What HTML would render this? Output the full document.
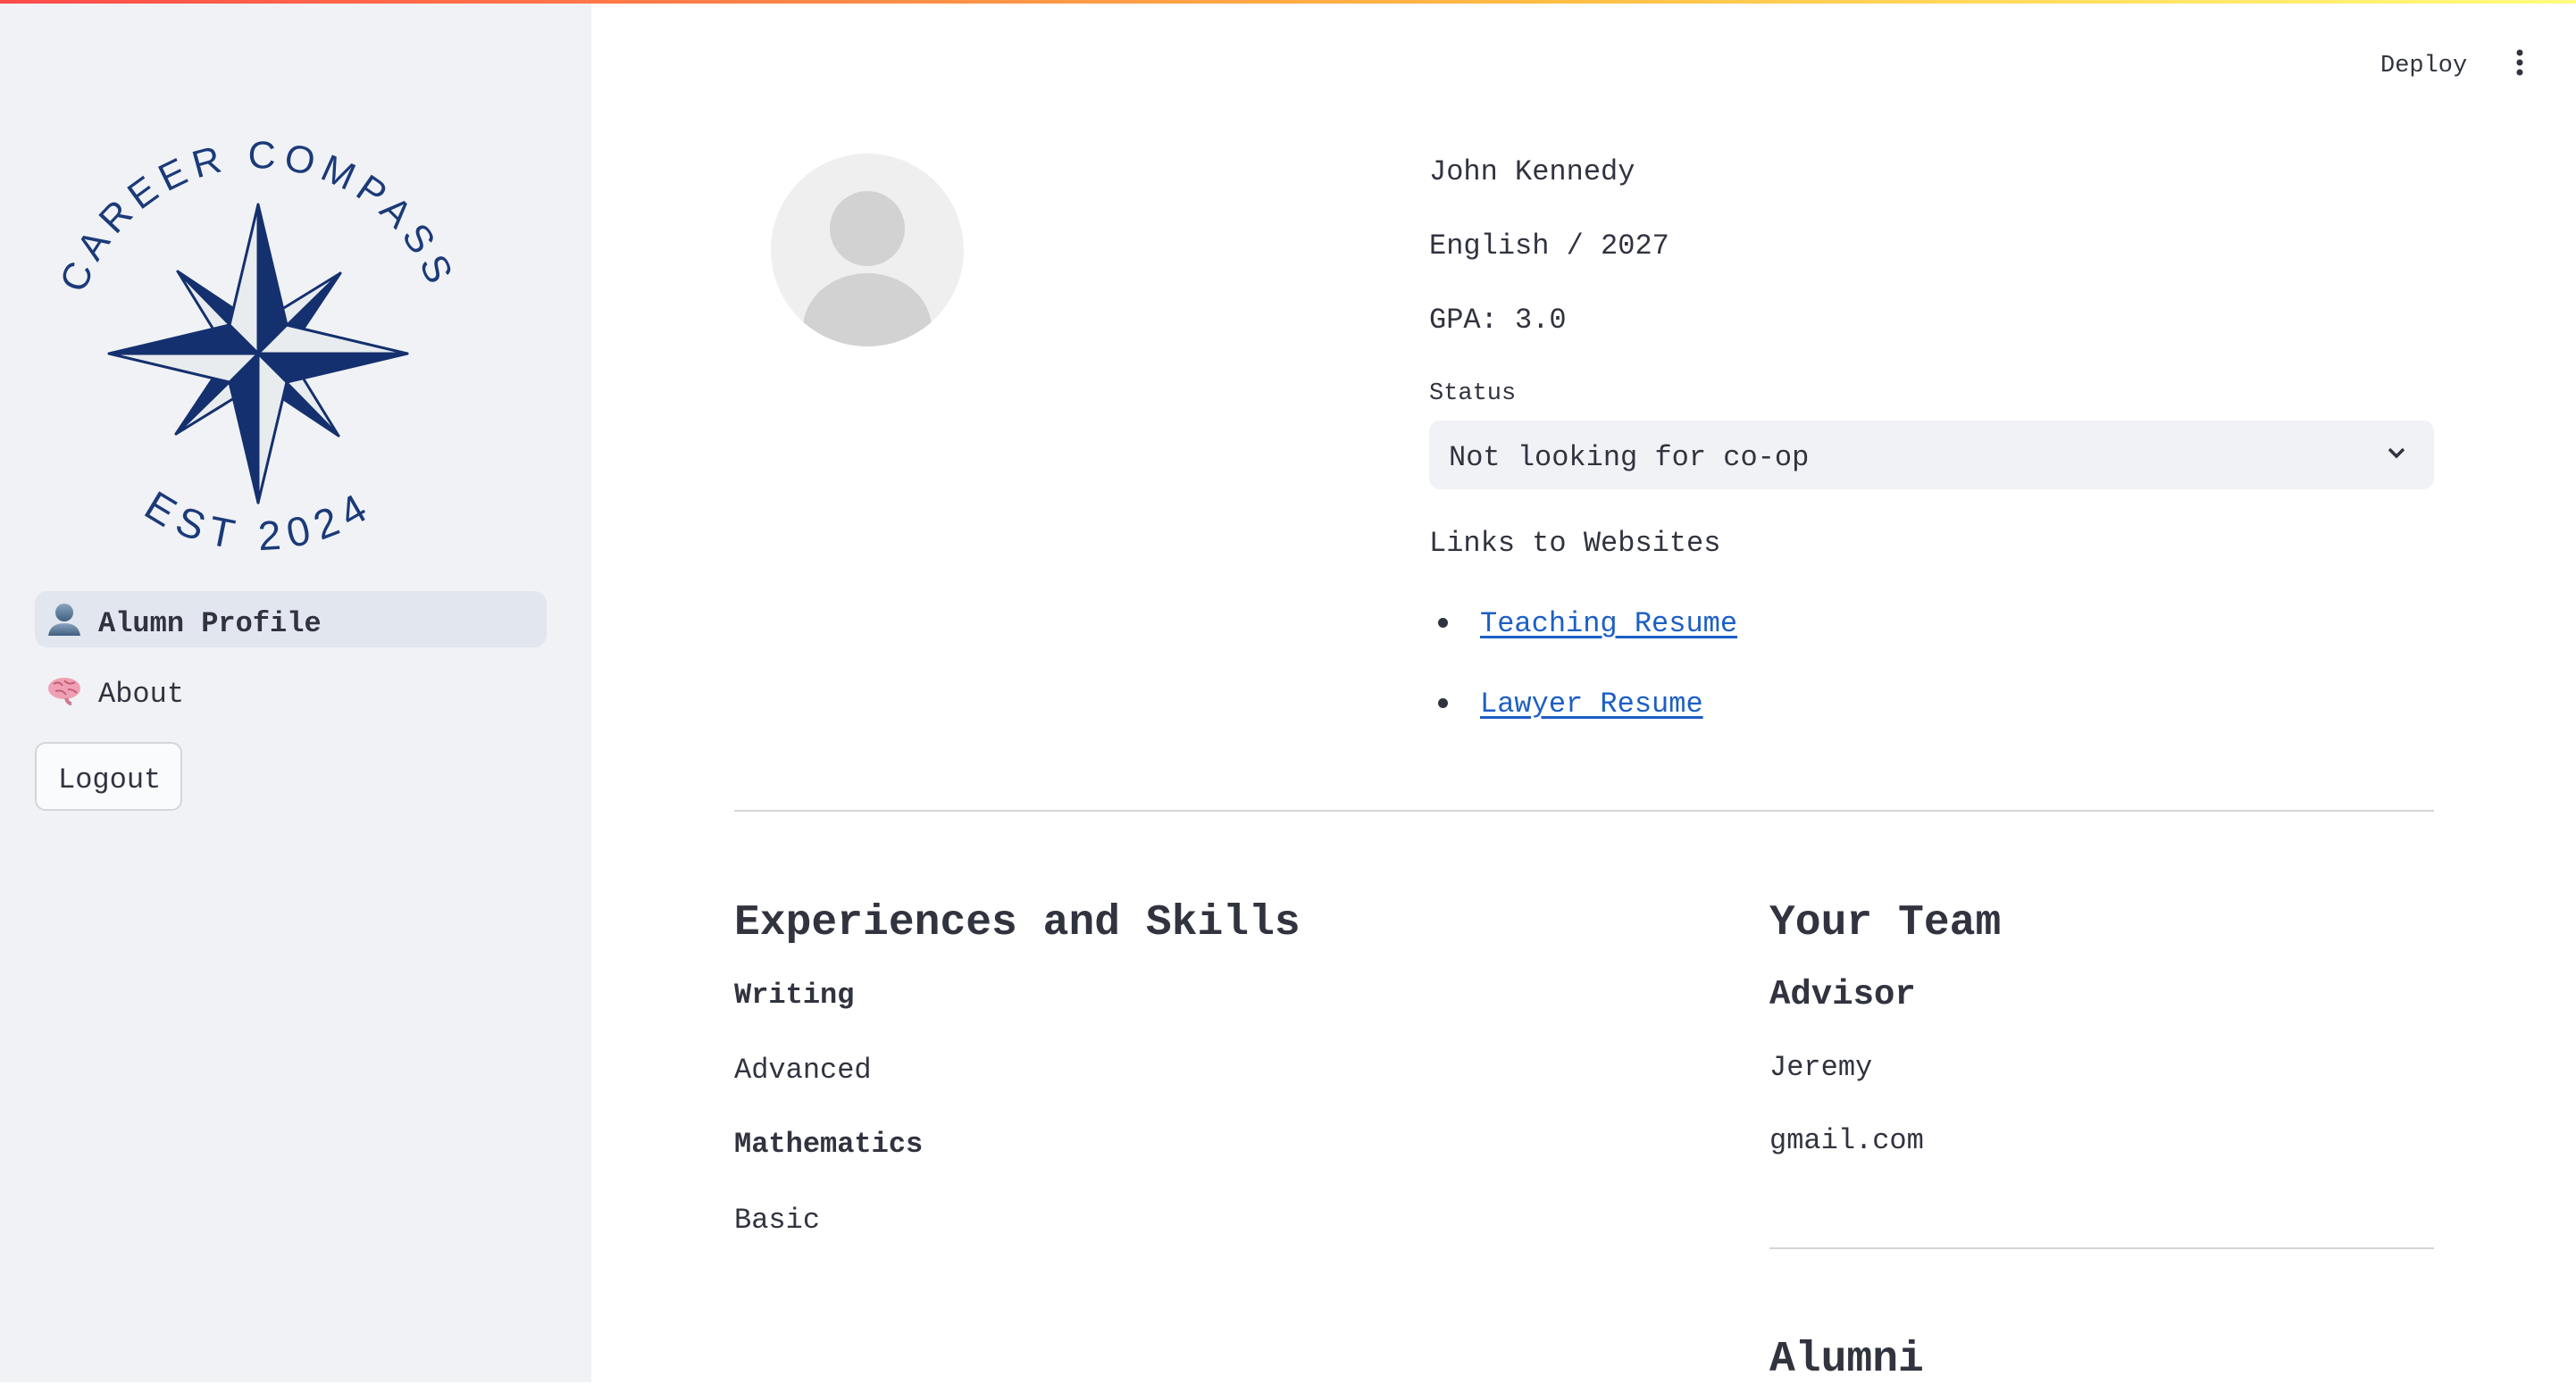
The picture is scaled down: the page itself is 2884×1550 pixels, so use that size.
<!DOCTYPE html>
<html><head><meta charset="utf-8"><style>
*{margin:0;padding:0;box-sizing:border-box}
body{width:2884px;height:1548px;overflow:hidden;background:#fff;font-family:"Liberation Mono",monospace;color:#31333f;position:relative}
.t{position:absolute;white-space:nowrap;line-height:1}
#bar{position:absolute;left:0;top:0;width:2884px;height:4px;background:linear-gradient(90deg,#ff4b4b,#ffbd45 60%,#fffd80)}
#side{position:absolute;left:0;top:0;width:662px;height:1548px;background:#f0f2f6}
.b{font-weight:bold}
a{color:#1c5fc4;text-decoration:underline;text-decoration-thickness:3px;text-underline-offset:5px}
#m .t{transform:translateY(4px)}
</style></head><body>
<div id="side"></div>
<div id="bar"></div>

<svg style="position:absolute;left:0;top:0" width="662" height="700" viewBox="0 0 662 700">
<defs>
<path id="arcT" d="M 94 330 A 205 205 0 0 1 484 330"/>
<path id="arcB" d="M 159 575 A 227 227 0 0 0 419 575"/>
<g id="diag" stroke="#14306e" stroke-width="3" stroke-linejoin="round">
<polygon points="0,0 27,-50 92,-90" fill="#e8ecef"/>
<polygon points="0,0 92,-90 48,-24" fill="#14306e"/>
</g>
<g id="main" stroke="#14306e" stroke-width="3" stroke-linejoin="round">
<polygon points="0,0 -32,-32 0,-167" fill="#e8ecef"/>
<polygon points="0,0 0,-167 32,-32" fill="#14306e"/>
</g>
</defs>
<text font-family="Liberation Sans,sans-serif" font-size="43" fill="#1b3a78"><textPath href="#arcT" textLength="505" lengthAdjust="spacing">CAREER COMPASS</textPath></text>
<text font-family="Liberation Sans,sans-serif" font-size="46" fill="#1b3a78"><textPath href="#arcB" textLength="270" lengthAdjust="spacing">EST 2024</textPath></text>
<g transform="translate(289,396)">
<use href="#diag"/><use href="#diag" transform="rotate(90)"/><use href="#diag" transform="rotate(180)"/><use href="#diag" transform="rotate(270)"/>
<use href="#main"/><use href="#main" transform="rotate(90)"/><use href="#main" transform="rotate(180)"/><use href="#main" transform="rotate(270)"/>
</g>
</svg>

<div id="m">
<div style="position:absolute;left:39px;top:662px;width:573px;height:63px;background:#e2e6ee;border-radius:14px"></div>
<svg style="position:absolute;left:52px;top:674px" width="40" height="40" viewBox="0 0 40 40"><defs><linearGradient id="pg" x1="0" y1="0" x2="0" y2="1"><stop offset="0" stop-color="#8aa4c0"/><stop offset="1" stop-color="#3f5f80"/></linearGradient></defs><circle cx="20" cy="12" r="10" fill="url(#pg)"/><path d="M2 38 Q4 24 20 24 Q36 24 38 38 Z" fill="url(#pg)"/></svg>
<div class="t b" style="left:110px;top:679px;font-size:32px">Alumn Profile</div>
<svg style="position:absolute;left:52px;top:756px" width="40" height="36" viewBox="0 0 40 36"><ellipse cx="20" cy="15" rx="18" ry="12" fill="#f0a0b4"/><path d="M8 10 q6 -4 10 2 M20 6 q5 6 12 2 M10 18 q8 -2 12 4 M24 16 q6 0 10 4" stroke="#c4607a" stroke-width="2" fill="none"/><path d="M22 26 q2 6 6 6" stroke="#d07890" stroke-width="4" fill="none"/></svg>
<div class="t" style="left:110px;top:758px;font-size:32px">About</div>
<div style="position:absolute;left:39px;top:831px;width:165px;height:77px;background:#fafbfc;border:2px solid #d4d6dc;border-radius:12px"></div>
<div class="t" style="left:65px;top:854px;font-size:32px">Logout</div>

<div class="t" style="left:2665px;top:57px;font-size:27px">Deploy</div>
<svg style="position:absolute;left:2812px;top:54px" width="18" height="32"><circle cx="9" cy="5" r="3.5" fill="#31333f"/><circle cx="9" cy="16" r="3.5" fill="#31333f"/><circle cx="9" cy="27" r="3.5" fill="#31333f"/></svg>

<svg style="position:absolute;left:863px;top:172px" width="216" height="216" viewBox="0 0 216 216"><clipPath id="cc"><circle cx="108" cy="108" r="108"/></clipPath><circle cx="108" cy="108" r="108" fill="#efefef"/><g clip-path="url(#cc)" fill="#d2d2d2"><circle cx="108" cy="84" r="42"/><ellipse cx="108" cy="196" rx="72" ry="62"/></g></svg>

<div class="t" style="left:1600px;top:173px;font-size:32px">John Kennedy</div>
<div class="t" style="left:1600px;top:256px;font-size:32px">English / 2027</div>
<div class="t" style="left:1600px;top:339px;font-size:32px">GPA: 3.0</div>
<div class="t" style="left:1600px;top:424px;font-size:27px">Status</div>
<div style="position:absolute;left:1600px;top:471px;width:1125px;height:77px;background:#f0f2f6;border-radius:12px"></div>
<div class="t" style="left:1622px;top:493px;font-size:32px">Not looking for co-op</div>
<svg style="position:absolute;left:2672px;top:500px" width="22" height="16"><path d="M3 3 L11 11 L19 3" stroke="#31333f" stroke-width="3.5" fill="none"/></svg>
<div class="t" style="left:1600px;top:589px;font-size:32px">Links to Websites</div>
<div style="position:absolute;left:1610px;top:692px;width:11px;height:11px;border-radius:50%;background:#31333f"></div>
<div class="t" style="left:1657px;top:679px;font-size:32px"><a>Teaching Resume</a></div>
<div style="position:absolute;left:1610px;top:782px;width:11px;height:11px;border-radius:50%;background:#31333f"></div>
<div class="t" style="left:1657px;top:769px;font-size:32px"><a>Lawyer Resume</a></div>

<div style="position:absolute;left:822px;top:907px;width:1903px;height:2px;background:#d6d6d9"></div>

<div class="t b" style="left:822px;top:1006px;font-size:48px">Experiences and Skills</div>
<div class="t b" style="left:822px;top:1095px;font-size:32px">Writing</div>
<div class="t" style="left:822px;top:1179px;font-size:32px">Advanced</div>
<div class="t b" style="left:822px;top:1262px;font-size:32px">Mathematics</div>
<div class="t" style="left:822px;top:1347px;font-size:32px">Basic</div>

<div class="t b" style="left:1981px;top:1006px;font-size:48px">Your Team</div>
<div class="t b" style="left:1981px;top:1091px;font-size:39px">Advisor</div>
<div class="t" style="left:1981px;top:1176px;font-size:32px">Jeremy</div>
<div class="t" style="left:1981px;top:1258px;font-size:32px">gmail.com</div>
<div style="position:absolute;left:1981px;top:1397px;width:744px;height:2px;background:#d6d6d9"></div>
<div class="t b" style="left:1981px;top:1495px;font-size:48px">Alumni</div>
</div>
</body></html>
